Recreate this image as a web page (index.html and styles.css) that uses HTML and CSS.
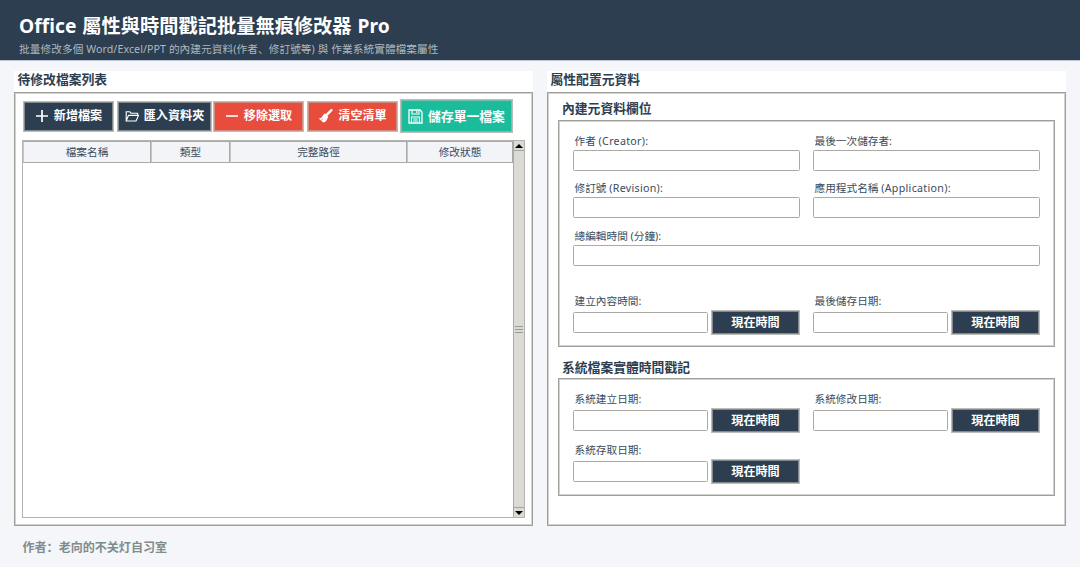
FILE: index.html
```html
<!DOCTYPE html>
<html lang="zh-Hans">
<head>
<meta charset="utf-8">
<title>Office 屬性與時間戳記批量無痕修改器 Pro</title>
<link rel="stylesheet" href="styles.css">
</head>
<body>
<header class="header">
  <h1 class="title">Office 屬性與時間戳記批量無痕修改器 Pro</h1>
  <p class="subtitle">批量修改多個 Word/Excel/PPT 的內建元資料(作者、修訂號等) 與 作業系統實體檔案屬性</p>
</header>
<main class="main">
  <section class="panel">
    <h2 class="panel-title">待修改檔案列表</h2>
    <div class="frame files">
      <div class="toolbar">
        <button class="btn add"><svg class="icon" viewBox="0 0 14 14"><path d="M7 1v12M1 7h12" stroke-width="1.7"/></svg>新增檔案</button>
        <button class="btn import"><svg class="icon" viewBox="0 0 14 14"><path d="M1.2 12V2.8h3.6l1.2 1.4h6.6v2.2M1.2 12l2.3-5.6h10L11 12z" stroke-width="1.1"/></svg>匯入資料夾</button>
        <button class="btn red remove"><svg class="icon" viewBox="0 0 14 14"><path d="M1 7h12" stroke-width="1.6"/></svg>移除選取</button>
        <button class="btn red clear"><svg class="icon wide" viewBox="0 0 15 14"><path d="M13.4 1.2 8.5 6.2" stroke-width="2.4" stroke-linecap="round"/><path class="solid" d="M6.8 4.3 10.4 7.9 9.6 9C9.2 11.2 7.5 13 5.2 13.6L.7 9.5C3 9.2 4.2 8.2 5 6.2z"/><path class="seam" d="M3 11.4l1.8-1.5" stroke-width=".6"/></svg>清空清單</button>
        <button class="btn save"><svg class="icon disk" viewBox="0 0 15 15"><path d="M1 1h11l2 2v11H1z" stroke-width="1.3"/><path d="M4 1v4h7V1M8.8 2v2M3.5 14V8h8v6M5.2 10h4.6M5.2 12h4.6" stroke-width="1.1"/></svg>儲存單一檔案</button>
      </div>
      <div class="tree">
        <div class="list">
          <div class="heads"><span>檔案名稱</span><span>類型</span><span>完整路徑</span><span>修改狀態</span></div>
        </div>
        <div class="scroll">
          <div class="arrow"><svg viewBox="0 0 8 4"><path d="M0 4 4 0l4 4z"/></svg></div>
          <div class="thumb"><i></i><i></i><i></i></div>
          <div class="arrow"><svg viewBox="0 0 8 4"><path d="M0 0h8L4 4z"/></svg></div>
        </div>
      </div>
    </div>
  </section>
  <section class="panel">
    <h2 class="panel-title">屬性配置元資料</h2>
    <div class="frame config">
      <h3 class="group-title">內建元資料欄位</h3>
      <div class="group meta">
        <label class="field"><span>作者 <span class="latin">(Creator):</span></span><input></label>
        <label class="field">最後一次儲存者:<input></label>
        <label class="field"><span>修訂號 <span class="latin">(Revision):</span></span><input></label>
        <label class="field"><span>應用程式名稱 <span class="latin">(Application):</span></span><input></label>
        <label class="field full">總編輯時間 (分鐘):<input></label>
        <div class="field">建立內容時間:<div class="pick"><input><button class="btn now">現在時間</button></div></div>
        <div class="field">最後儲存日期:<div class="pick"><input><button class="btn now">現在時間</button></div></div>
      </div>
      <h3 class="group-title second">系統檔案實體時間戳記</h3>
      <div class="group system">
        <div class="field">系統建立日期:<div class="pick"><input><button class="btn now">現在時間</button></div></div>
        <div class="field">系統修改日期:<div class="pick"><input><button class="btn now">現在時間</button></div></div>
        <div class="field">系統存取日期:<div class="pick"><input><button class="btn now">現在時間</button></div></div>
      </div>
    </div>
  </section>
</main>
<footer class="footer">作者：老向的不关灯自习室</footer>
</body>
</html>
```
FILE: styles.css
```css
* { box-sizing: border-box; }
body {
  margin: 0;
  width: 1080px;
  height: 567px;
  overflow: hidden;
  background: #f4f6fa;
  color: #2c3e50;
  font-family: "Noto Sans", "Noto Sans CJK SC", sans-serif;
}
h1, h2, h3, p { margin: 0; }
button, input { font-family: inherit; }
.header {
  height: 61px;
  padding: 12px 19px 0;
  background: #2c3e50;
  border-bottom: 1px solid #bcc5d7;
}
.title { color: #fff; font-size: 19.2px; line-height: 28px; font-weight: 700; letter-spacing: .05px; word-spacing: .8px; white-space: nowrap; }
.subtitle { color: #aeb8bf; font-size: 10.67px; line-height: 18px; letter-spacing: .07px; white-space: nowrap; }
.main { display: flex; gap: 14px; padding: 10px 14px 0; }
.panel { width: 519px; height: 455px; background: #fff; }
.panel-title { height: 21px; padding-left: 3.5px; font-size: 12.8px; line-height: 17px; }
.frame { height: 434px; border: 1px solid #9f9f9b; box-shadow: inset 0 0 0 1px #d2d2cf; }
.files { padding: 6px 7px 0; }
.toolbar { display: flex; align-items: center; gap: 2px; height: 34px; padding-left: 1px; }
.btn {
  display: flex;
  align-items: center;
  justify-content: center;
  gap: 5px;
  height: 31px;
  padding: 0;
  border: 1px solid #bdbdb8;
  box-shadow: inset 0 0 0 1px rgba(190, 190, 184, .6);
  background: #2c3e50;
  color: #fff;
  font-size: 12.1px;
  line-height: 16px;
  font-weight: 700;
  white-space: nowrap;
}
.add { width: 91px; }
.import { width: 95px; margin-left: 1px; }
.red { width: 91px; background: #e74c3c; }
.clear { margin-left: 1px; }
.remove { margin-left: -1px; }
.save { width: 113px; height: 34px; background: #1abc9c; font-size: 12.8px; }
.icon { width: 14px; height: 14px; fill: none; stroke: #fff; }
.wide { width: 15px; }
.disk { width: 15px; height: 15px; }
.solid { fill: #fff; stroke: none; }
.seam { stroke: #e74c3c; }
.tree { display: flex; height: 378px; margin-top: 7px; border: 1px solid #b3b3af; }
.list { flex: 1; }
.heads { display: grid; grid-template-columns: 128px 79px 177px 106px; height: 21px; }
.heads span {
  border: 1px solid #aaaaa6;
  border-left-color: #c6c6c2;
  background: #f2f4f8;
  color: #3a4b5c;
  font-size: 10.67px;
  line-height: 20px;
  text-align: center;
}
.scroll { display: flex; flex-direction: column; width: 11px; border-left: 1px solid #a9a9a5; background: #dcdad5; }
.arrow { display: flex; align-items: center; justify-content: center; height: 9px; }
.arrow svg { width: 8px; height: 4px; fill: #000; }
.thumb {
  display: flex;
  flex: 1;
  flex-direction: column;
  align-items: center;
  justify-content: center;
  gap: 2px;
  border: solid #a3a3a0;
  border-width: 1px 0;
}
.thumb i { width: 8px; height: 1px; background: #9b9b98; }
.config { padding: 6px 10px 0; }
.group-title { height: 21px; padding-left: 4px; font-size: 12.8px; line-height: 18px; }
.second { height: 23px; margin-top: 8px; line-height: 24px; }
.group {
  display: grid;
  grid-template-columns: 227px 227px;
  column-gap: 13px;
  align-content: start;
  width: 497px;
  padding: 11px 14px 0;
  border: 1px solid #9f9f9b;
  box-shadow: inset 0 0 0 1px #d2d2cf;
}
.meta { height: 227px; grid-template-rows: 47.4px 47.5px 65px 50px; }
.system { height: 118px; grid-template-rows: 51px 51px; }
.field { display: flex; flex-direction: column; color: #3a4b5c; font-size: 10.67px; line-height: 18px; text-indent: 1.5px; }
.latin { letter-spacing: .3px; }
.full { grid-column: 1 / 3; }
.field input { width: 100%; height: 21px; padding: 0 3px; border: 1px solid #a9a9a6; border-radius: 1.5px; background: #fff; outline: 0; }
.pick { display: flex; align-items: center; justify-content: space-between; height: 25px; }
.pick input { width: 135px; }
.now { width: 89px; height: 25px; padding-top: 1px; text-indent: 0; }
.footer { padding: 12px 22.5px 0; color: #7f8c8d; font-size: 12.05px; line-height: 19px; font-weight: 700; }
```
